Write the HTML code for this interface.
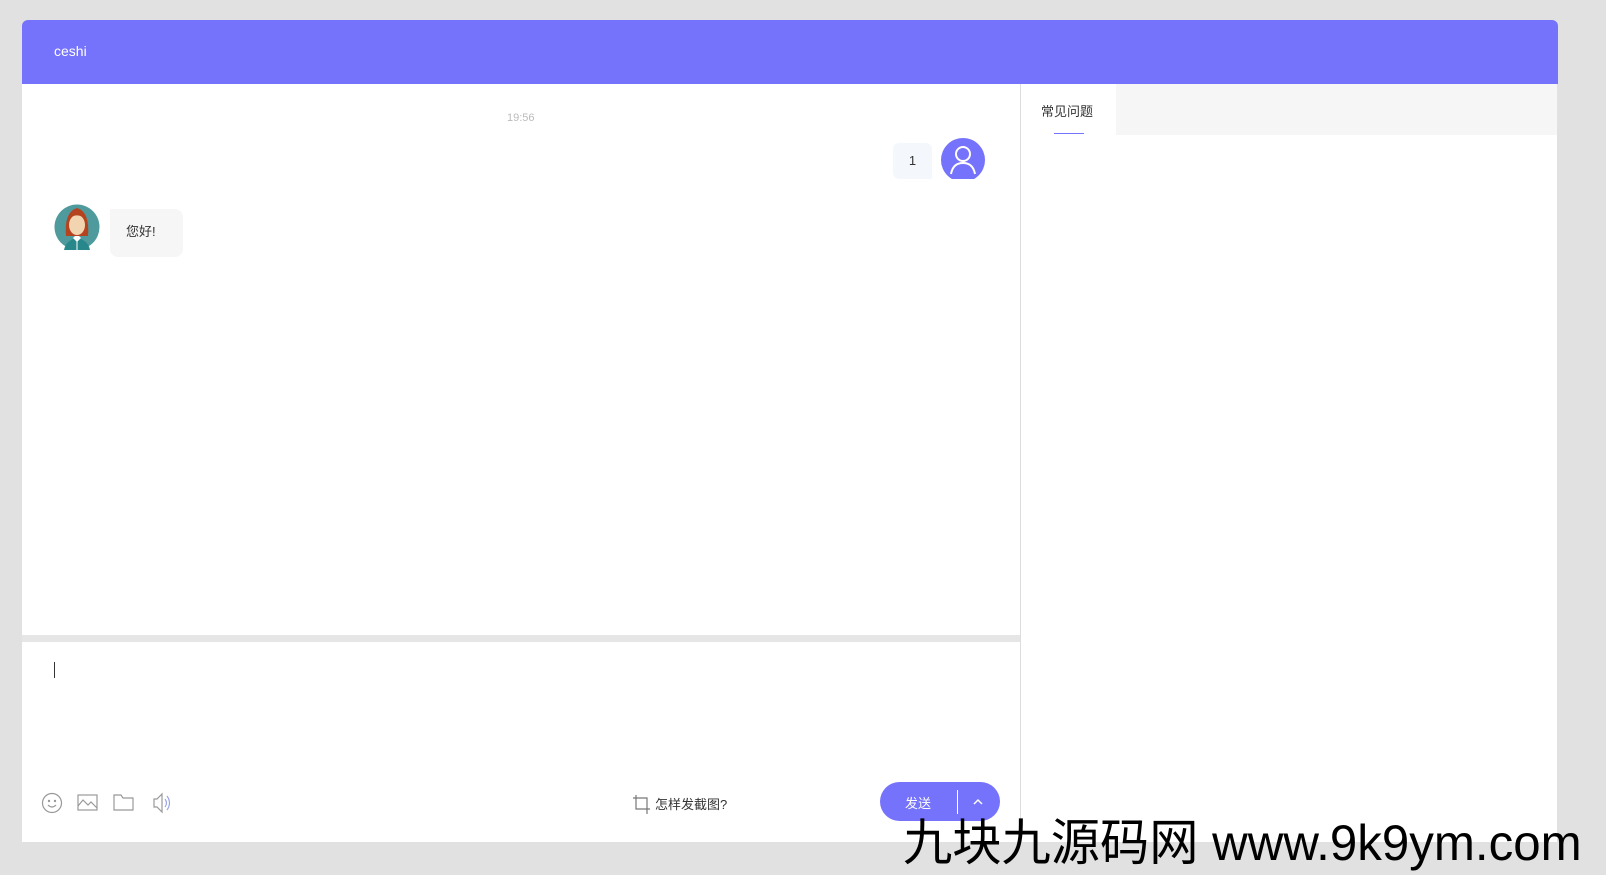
<!DOCTYPE html>
<html><head><meta charset="utf-8"><style>
*{margin:0;padding:0;box-sizing:border-box}
body{width:1606px;height:872px;background:#e1e1e1;position:relative;overflow:hidden;font-family:"Liberation Sans","Noto Sans CJK SC",sans-serif}
.a{position:absolute}
</style></head><body>
<div class="a" style="left:22px;top:20px;width:1536px;height:64px;background:#7572fb;border-radius:6px 6px 0 0"></div>
<div class="a" style="left:54px;top:43px;color:#fff;font-size:14px">ceshi</div>
<div class="a" style="left:22px;top:84px;width:998px;height:551px;background:#fff"></div>
<div class="a" style="left:22px;top:635px;width:998px;height:7px;background:#e6e6e6"></div>
<div class="a" style="left:22px;top:642px;width:998px;height:200px;background:#fff"></div>
<div class="a" style="left:1020px;top:84px;width:1px;height:758px;background:#ddd"></div>
<div class="a" style="left:1021px;top:84px;width:536px;height:758px;background:#fff"></div>
<div class="a" style="left:1116px;top:84px;width:441px;height:51px;background:#f6f6f6"></div>
<div class="a" style="left:1041px;top:101px;font-size:13px;color:#333">常见问题</div>
<div class="a" style="left:1054px;top:133px;width:30px;height:1px;background:#7572fb"></div>
<div class="a" style="left:507px;top:112px;font-size:11px;color:#bbb">19:56</div>
<div class="a" style="left:893px;top:143px;width:39px;height:36px;background:#f4f8fd;border-radius:6px 6px 0 6px;font-size:13px;color:#333;text-align:center;line-height:36px">1</div>
<div class="a" style="left:941px;top:138px;width:44px;height:41px;overflow:hidden">
<div style="width:44px;height:44px;border-radius:50%;background:#7572fb"></div>
<svg class="a" style="left:0;top:0" width="44" height="41" viewBox="0 0 44 41"><circle cx="22" cy="16" r="7" fill="none" stroke="#fff" stroke-width="2"/><path d="M10 36 Q12 25 22 25 Q32 25 34 36" fill="none" stroke="#fff" stroke-width="2"/></svg></div>
<svg class="a" style="left:54px;top:204px" width="46" height="46" viewBox="0 0 46 46"><circle cx="23" cy="23" r="22.5" fill="#4f9a9c"/><path d="M10 46 Q12 36 23 34 Q34 36 36 46Z" fill="#27878a"/><path d="M12 32 Q10 8 23 4 Q36 8 34 32 Z" fill="#b6431f"/><ellipse cx="23" cy="21" rx="8" ry="10" fill="#f2d5b0"/><path d="M15 16 Q20 8 31 14 L30 10 Q23 4 15 12Z" fill="#b6431f"/><path d="M19 34 L23 38 L27 34 L25 32 L21 32Z" fill="#fff"/><line x1="23" y1="37" x2="23" y2="46" stroke="#fff"/></svg>
<div class="a" style="left:110px;top:209px;width:73px;height:48px;background:#f6f6f6;border-radius:0 8px 8px 8px;font-size:13px;color:#333;padding:12px 0 0 16px">您好!</div>
<div class="a" style="left:54px;top:662px;width:1px;height:16px;background:#333"></div>
<svg class="a" style="left:41px;top:791px" width="140" height="24" viewBox="0 0 140 24"><g fill="none" stroke="#999" stroke-width="1.2"><circle cx="11" cy="12" r="9.5"/><circle cx="8" cy="10" r=".6"/><circle cx="14" cy="10" r=".6"/><path d="M7 14 Q11 18 15 14"/><rect x="37" y="4" width="19" height="15"/><path d="M37 15 L42 9 L47 14 L50 11 L56 17"/><path d="M73 4 H80 L82 7 H92 V19 H73Z"/><path d="M113 8 H116 L121 3 V21 L116 16 H113Z"/><path d="M124 8 Q127 12 124 16 M126 5 Q131 12 126 19" stroke="#9aa6e6"/></g></svg>
<svg class="a" style="left:632px;top:794px" width="18" height="20" viewBox="0 0 18 20"><path d="M4 1 V15 H18 M1 4 H15 V20" fill="none" stroke="#777" stroke-width="1.2"/></svg>
<div class="a" style="left:655px;top:794px;font-size:13px;color:#333">怎样发截图?</div>
<div class="a" style="left:880px;top:782px;width:120px;height:39px;background:#7572fb;border-radius:20px"></div>
<div class="a" style="left:905px;top:793px;font-size:13px;color:#fff">发送</div>
<div class="a" style="left:957px;top:790px;width:1px;height:24px;background:#fff"></div>
<svg class="a" style="left:972px;top:797px" width="12" height="10" viewBox="0 0 12 10"><path d="M2 7 L6 3 L10 7" fill="none" stroke="#fff" stroke-width="1.5"/></svg>
<div class="a" style="left:903px;top:803px;font-size:50px;color:#000;white-space:nowrap;letter-spacing:0;transform:scaleX(0.985);transform-origin:left">九块九源码网 www.9k9ym.com</div>
</body></html>
